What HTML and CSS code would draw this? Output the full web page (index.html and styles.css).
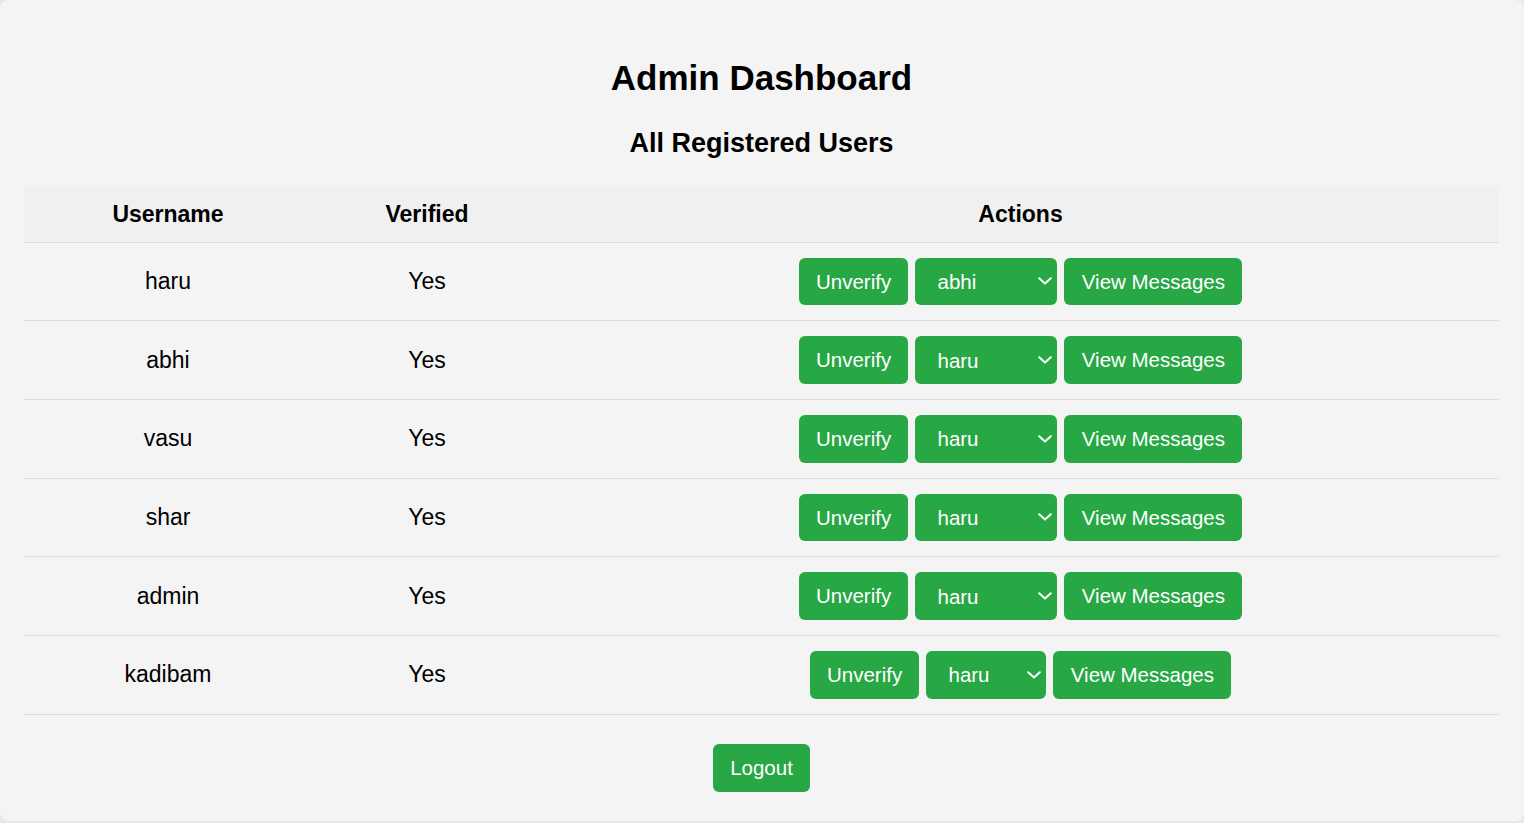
FILE: index.html
```html
<!DOCTYPE html>
<html lang="en">
<head>
<meta charset="utf-8">
<title>Admin Dashboard</title>
<link rel="stylesheet" href="styles.css">
</head>
<body>
<div class="container">
  <h1 class="title">Admin Dashboard</h1>
  <h2 class="subtitle">All Registered Users</h2>
  <table class="users">
    <thead>
      <tr>
        <th class="col-user">Username</th>
        <th class="col-verified">Verified</th>
        <th class="col-actions">Actions</th>
      </tr>
    </thead>
    <tbody>
      <tr>
        <td>haru</td>
        <td>Yes</td>
        <td>
          <div class="actions">
            <button class="btn">Unverify</button>
            <span class="select-wrap">
              <select class="user-select">
                <option>abhi</option><option>vasu</option><option>shar</option><option>admin</option><option>kadibam</option>
              </select>
              <svg class="chev" width="14" height="8" viewBox="0 0 14 8"><polyline points="1.2,1.2 7,6.6 12.8,1.2" fill="none" stroke="#fff" stroke-width="2" stroke-linecap="round" stroke-linejoin="round"/></svg>
            </span>
            <button class="btn">View Messages</button>
          </div>
        </td>
      </tr>
      <tr>
        <td>abhi</td>
        <td>Yes</td>
        <td>
          <div class="actions">
            <button class="btn">Unverify</button>
            <span class="select-wrap">
              <select class="user-select">
                <option>haru</option><option>vasu</option><option>shar</option><option>admin</option><option>kadibam</option>
              </select>
              <svg class="chev" width="14" height="8" viewBox="0 0 14 8"><polyline points="1.2,1.2 7,6.6 12.8,1.2" fill="none" stroke="#fff" stroke-width="2" stroke-linecap="round" stroke-linejoin="round"/></svg>
            </span>
            <button class="btn">View Messages</button>
          </div>
        </td>
      </tr>
      <tr>
        <td>vasu</td>
        <td>Yes</td>
        <td>
          <div class="actions">
            <button class="btn">Unverify</button>
            <span class="select-wrap">
              <select class="user-select">
                <option>haru</option><option>abhi</option><option>shar</option><option>admin</option><option>kadibam</option>
              </select>
              <svg class="chev" width="14" height="8" viewBox="0 0 14 8"><polyline points="1.2,1.2 7,6.6 12.8,1.2" fill="none" stroke="#fff" stroke-width="2" stroke-linecap="round" stroke-linejoin="round"/></svg>
            </span>
            <button class="btn">View Messages</button>
          </div>
        </td>
      </tr>
      <tr>
        <td>shar</td>
        <td>Yes</td>
        <td>
          <div class="actions">
            <button class="btn">Unverify</button>
            <span class="select-wrap">
              <select class="user-select">
                <option>haru</option><option>abhi</option><option>vasu</option><option>admin</option><option>kadibam</option>
              </select>
              <svg class="chev" width="14" height="8" viewBox="0 0 14 8"><polyline points="1.2,1.2 7,6.6 12.8,1.2" fill="none" stroke="#fff" stroke-width="2" stroke-linecap="round" stroke-linejoin="round"/></svg>
            </span>
            <button class="btn">View Messages</button>
          </div>
        </td>
      </tr>
      <tr>
        <td>admin</td>
        <td>Yes</td>
        <td>
          <div class="actions">
            <button class="btn">Unverify</button>
            <span class="select-wrap">
              <select class="user-select">
                <option>haru</option><option>abhi</option><option>vasu</option><option>shar</option><option>kadibam</option>
              </select>
              <svg class="chev" width="14" height="8" viewBox="0 0 14 8"><polyline points="1.2,1.2 7,6.6 12.8,1.2" fill="none" stroke="#fff" stroke-width="2" stroke-linecap="round" stroke-linejoin="round"/></svg>
            </span>
            <button class="btn">View Messages</button>
          </div>
        </td>
      </tr>
      <tr>
        <td>kadibam</td>
        <td>Yes</td>
        <td>
          <div class="actions">
            <button class="btn">Unverify</button>
            <span class="select-wrap">
              <select class="user-select">
                <option>haru</option><option>abhi</option><option>vasu</option><option>shar</option><option>admin</option>
              </select>
              <svg class="chev" width="14" height="8" viewBox="0 0 14 8"><polyline points="1.2,1.2 7,6.6 12.8,1.2" fill="none" stroke="#fff" stroke-width="2" stroke-linecap="round" stroke-linejoin="round"/></svg>
            </span>
            <button class="btn">View Messages</button>
          </div>
        </td>
      </tr>
    </tbody>
  </table>
  <div class="footer">
    <button class="btn">Logout</button>
  </div>
</div>
</body>
</html>
```

FILE: styles.css
```css
html, body {
  margin: 0;
  padding: 0;
}

body {
  background: #e8e8e8;
  font-family: "Liberation Sans", Arial, sans-serif;
  color: #000;
  height: 823px;
}

.container {
  background: #f4f4f4;
  border-radius: 9px;
  height: 821px;
  box-sizing: border-box;
  padding: 30px 25px 29px 24px;
}

.title {
  font-size: 35px;
  line-height: 40px;
  font-weight: bold;
  text-align: center;
  margin: 28px 0 29.5px;
}

.subtitle {
  font-size: 27px;
  line-height: 31px;
  font-weight: bold;
  text-align: center;
  margin: 0 0 27.5px;
}

.users {
  width: 100%;
  border-collapse: collapse;
  table-layout: fixed;
}

.users th {
  background: #f0f0f0;
  font-size: 23px;
  line-height: 26px;
  font-weight: bold;
  padding: 15px 8px 14.5px;
  text-align: center;
  border-bottom: 1px solid #dddddd;
}

.col-user { width: 272px; }
.col-verified { width: 214px; }

.users td {
  font-size: 23px;
  padding: 15px 8px;
  text-align: center;
  vertical-align: middle;
  border-bottom: 1px solid #dddddd;
}

.actions {
  display: flex;
  justify-content: center;
  align-items: center;
  gap: 7px;
}

.btn {
  background: #28a745;
  color: #fff;
  border: none;
  border-radius: 6px;
  font-family: "Liberation Sans", Arial, sans-serif;
  font-size: 20.5px;
  line-height: 23.67px;
  padding: 12px 17.3px;
  margin: 0;
  cursor: pointer;
}

.select-wrap {
  position: relative;
  display: inline-block;
}

.user-select {
  -webkit-appearance: none;
  appearance: none;
  background: #28a745;
  color: #fff;
  border: none;
  border-radius: 6px;
  font-family: "Liberation Sans", Arial, sans-serif;
  font-size: 20.5px;
  height: 47.67px;
  padding: 0 42px 0 22px;
  margin: 0;
  display: block;
}

.chev {
  position: absolute;
  right: 5.5px;
  top: 50%;
  margin-top: -4px;
  pointer-events: none;
}

.footer {
  display: flex;
  justify-content: center;
  margin-top: 29.5px;
}
```
